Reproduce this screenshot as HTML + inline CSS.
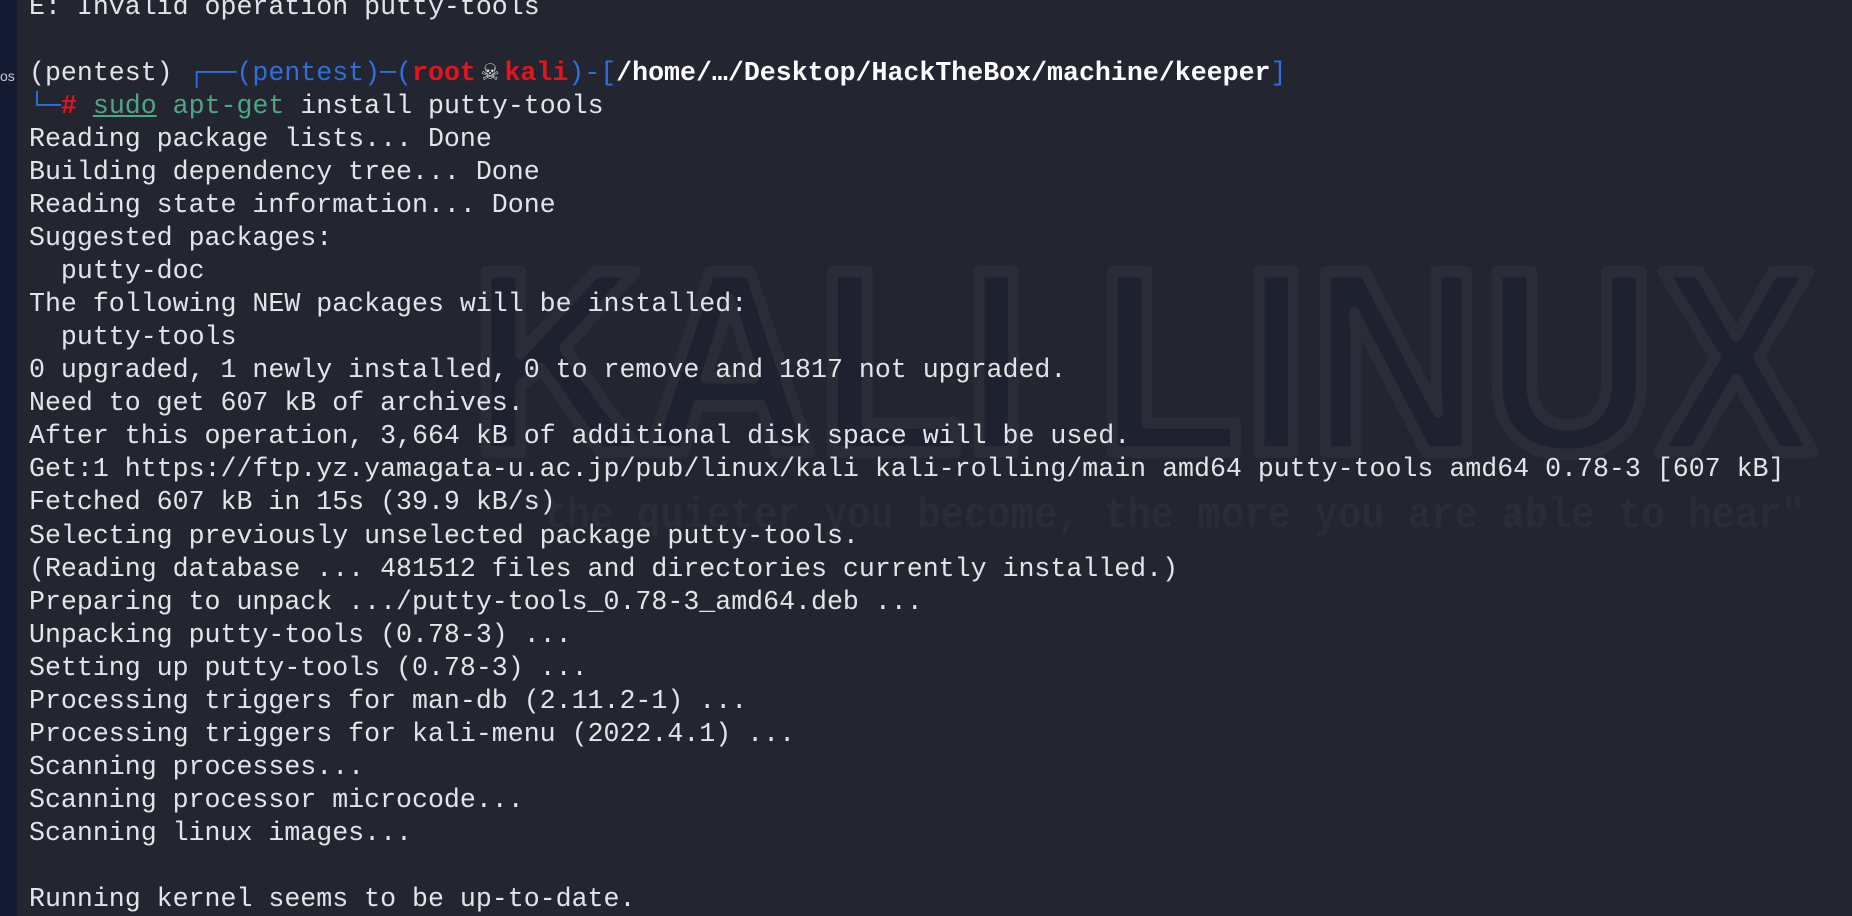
<!DOCTYPE html>
<html><head><meta charset="utf-8"><style>
html,body{margin:0;padding:0;width:1852px;height:916px;overflow:hidden;background:#232530;}
#strip{position:absolute;left:0;top:0;width:17px;height:916px;background:#151a33;}
#os{position:absolute;left:0;top:68px;font:14px "Liberation Sans",sans-serif;color:#c8c8d0;}
#wm{position:absolute;left:0;top:0;}
pre{position:absolute;left:29px;top:-9.5px;margin:0;font-family:"Liberation Mono","DejaVu Sans Mono",monospace;font-size:26.6px;line-height:33.07px;color:#e4e4e8;white-space:pre;}
.b{color:#2f6fdb}.r{color:#e3141c;font-weight:bold}.g{color:#4ea784}.w{color:#fff;font-weight:bold}
.sk{display:inline-block;width:1.7ch;text-align:center;color:#ddd;font-size:28px;font-weight:normal}
</style></head><body>
<div id="strip"></div><div id="os">os</div>
<svg id="wm" width="1852" height="916">
<text x="470" y="452" textLength="1346" lengthAdjust="spacingAndGlyphs" font-family="Liberation Sans Narrow, Liberation Sans, sans-serif" font-weight="bold" font-size="262" fill="#1e2230" stroke="#2a2d38" stroke-width="12" stroke-linejoin="round">KALI LINUX</text>
<text x="520" y="527" textLength="1285" lengthAdjust="spacingAndGlyphs" font-family="Liberation Mono, monospace" font-weight="bold" font-size="44" fill="#2a2d38">"the quieter you become, the more you are able to hear"</text>
</svg>
<pre>E: Invalid operation putty-tools

(pentest) <span class="b">┌──(pentest)─(</span><span class="r">root<span class="sk">☠</span>kali</span><span class="b">)-[</span><span class="w">/home/…/Desktop/HackTheBox/machine/keeper</span><span class="b">]</span>
<span class="b">└─</span><span class="r">#</span> <span class="g" style="text-decoration:underline">sudo</span> <span class="g">apt-get</span> install putty-tools
Reading package lists... Done
Building dependency tree... Done
Reading state information... Done
Suggested packages:
  putty-doc
The following NEW packages will be installed:
  putty-tools
0 upgraded, 1 newly installed, 0 to remove and 1817 not upgraded.
Need to get 607 kB of archives.
After this operation, 3,664 kB of additional disk space will be used.
Get:1 https://ftp.yz.yamagata-u.ac.jp/pub/linux/kali kali-rolling/main amd64 putty-tools amd64 0.78-3 [607 kB]
Fetched 607 kB in 15s (39.9 kB/s)
Selecting previously unselected package putty-tools.
(Reading database ... 481512 files and directories currently installed.)
Preparing to unpack .../putty-tools_0.78-3_amd64.deb ...
Unpacking putty-tools (0.78-3) ...
Setting up putty-tools (0.78-3) ...
Processing triggers for man-db (2.11.2-1) ...
Processing triggers for kali-menu (2022.4.1) ...
Scanning processes...
Scanning processor microcode...
Scanning linux images...

Running kernel seems to be up-to-date.</pre>
</body></html>
